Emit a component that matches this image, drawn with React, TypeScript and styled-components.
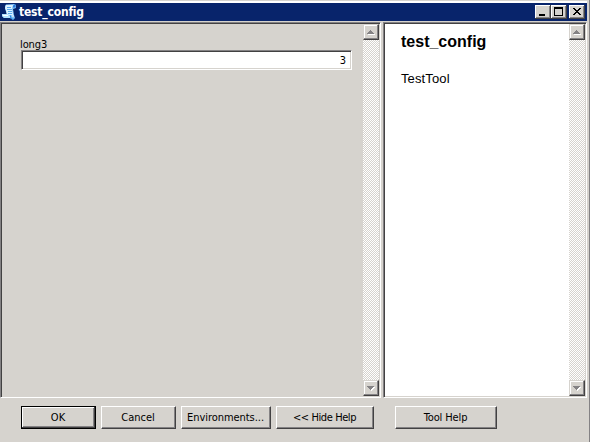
import React from "react";
import styled, { createGlobalStyle, css } from "styled-components";

const face = "#d6d3ce";
const shade = "#848284";
const dark = "#424142";
const uiFont = '"DejaVu Sans Condensed", "DejaVu Sans", sans-serif';

const GlobalStyle = createGlobalStyle`
  * { box-sizing: border-box; }
  body { margin: 0; overflow: hidden; background: ${face}; }
`;

const Window = styled.main`
  width: 590px;
  height: 442px;
  display: flex;
  flex-direction: column;
  background: ${face};
  border-right: 1px solid ${shade};
  font: 11px/14px ${uiFont};
  color: #000;
`;

const TitleBar = styled.header`
  height: 18px;
  margin: 3px 2px 1px 0;
  padding: 0 2px 0 2px;
  display: flex;
  align-items: center;
  background: #08246b;
  color: #fff;
  box-shadow: 0 -2px #fff;
`;

const Title = styled.h1`
  flex: 1;
  margin: 0 0 0 1px;
  font: bold 12px/18px ${uiFont};
  letter-spacing: -0.2px;
`;

const CaptionButton = styled.button<{ $gap?: boolean }>`
  width: 16px;
  height: 14px;
  padding: 0;
  margin-left: ${(p) => (p.$gap ? 2 : 0)}px;
  border: 0;
  display: flex;
  background: ${face};
  box-shadow: inset -1px -1px ${dark}, inset 1px 1px #fff, inset -2px -2px ${shade};
`;

const Panes = styled.div`
  height: 376px;
  display: grid;
  grid-template-columns: 381px 204px;
  column-gap: 2px;
`;

const Pane = styled.section<{ $white?: boolean }>`
  display: flex;
  border: 1px solid;
  border-color: ${shade} #fff #fff ${shade};
  background: ${(p) => (p.$white ? "#fff" : face)};
  box-shadow: inset 1px 1px ${dark}, inset -1px -1px ${face};
  padding: 1px;
`;

const FormBody = styled.div`
  flex: 1;
  padding: 13px 11px 0 19px;
`;

const Label = styled.label`
  display: block;
  height: 13px;
  line-height: 16px;
  margin-left: -1px;
  letter-spacing: -0.1px;
`;

const NumberField = styled.input`
  display: block;
  width: 331px;
  height: 20px;
  padding: 1px 5px 0 4px;
  border: 1px solid;
  border-color: ${shade} #fff #fff ${shade};
  box-shadow: inset 1px 1px ${dark}, inset -1px -1px ${face};
  background: #fff;
  outline: 0;
  font: 11px ${uiFont};
  text-align: right;
`;

const HelpBody = styled.article`
  flex: 1;
  padding: 8px 0 0 16px;
  font-family: "Liberation Sans", Arial, sans-serif;
`;

const HelpTitle = styled.h2`
  margin: 0;
  font-size: 16px;
  line-height: 20px;
`;

const HelpText = styled.p`
  margin: 19px 0 0;
  font-size: 13px;
  line-height: 16px;
  letter-spacing: 0.12px;
`;

const ScrollBar = styled.div`
  width: 16px;
  display: flex;
  flex-direction: column;
  justify-content: space-between;
  background: repeating-conic-gradient(#fff 0 25%, ${face} 0 50%) 0 0 / 2px 2px;
`;

const raised = css`
  background: ${face};
  border: 1px solid;
  border-color: #fff ${dark} ${dark} #fff;
  box-shadow: inset -1px -1px ${shade};
`;

const ScrollButton = styled.button`
  width: 16px;
  height: 16px;
  padding: 0;
  display: flex;
  background: ${face};
  border: 1px solid;
  border-color: ${face} ${dark} ${dark} ${face};
  box-shadow: inset -1px -1px ${shade}, inset 1px 1px #fff;
`;

const Footer = styled.footer`
  display: flex;
  gap: 5px;
  padding: 8px 0 0 21px;
`;

const PushButton = styled.button<{ $width: number; $default?: boolean; $apart?: boolean; $spacing?: number }>`
  ${raised}
  width: ${(p) => p.$width}px;
  height: 23px;
  padding: 1px 1px 0 0;
  margin-left: ${(p) => (p.$apart ? 16 : 0)}px;
  font: 11px/14px ${uiFont};
  letter-spacing: ${(p) => p.$spacing ?? 0}px;
  white-space: nowrap;
  color: #000;
  ${(p) =>
    p.$default &&
    css`
      border-color: #000;
      box-shadow: inset -1px -1px ${dark}, inset 1px 1px #fff, inset -2px -2px ${shade};
    `}
`;

const ScriptIcon = () => (
  <svg width="16" height="18" viewBox="0 0 16 18">
    <path d="M4 1.5 12 1l2 1v3l-3 1 1 6 1 3-2 2-3-2H2l-2-2v-2h5L3 6V3z" fill="#84c3f7" />
    <path d="M4 2h7l-1 3 1 7-6 1-1-6-1-2z" fill="#def3ff" />
    <path d="M12 1.5h1.5v3H11V3z" fill="#2979d6" />
    <path d="M5 4.5h4M5 6.5h5M6 8.5h4M6 10.5h4" stroke="#5aaaf0" />
    <path d="M0 11h6l2 2v2H2l-2-2z" fill="#b5e3ff" />
    <path d="M1 12.5h5M10 13h2" stroke="#fff" />
    <path d="M8 12l1 3 2 1.5 1-1" stroke="#2986de" fill="none" />
  </svg>
);

const Arrow = ({ down }: { down?: boolean }) => (
  <svg width="14" height="14" viewBox="0 0 14 14" shapeRendering="crispEdges">
    {down ? (
      <>
        <path d="M4 6h7v1h-1v1H9v1H8v1H7V9H6V8H5V7H4z" fill="#fff" />
        <path d="M3 5h7v1H9v1H8v1H7v1H6V8H5V7H4V6H3z" fill={shade} />
      </>
    ) : (
      <>
        <path d="M4 9h7v1H4z" fill="#fff" />
        <path d="M6 5h1v1h1v1h1v1h1v1H3V8h1V7h1V6h1z" fill={shade} />
      </>
    )}
  </svg>
);

const Scroll = () => (
  <ScrollBar>
    <ScrollButton aria-label="Scroll up"><Arrow /></ScrollButton>
    <ScrollButton aria-label="Scroll down"><Arrow down /></ScrollButton>
  </ScrollBar>
);

const glyphs = {
  minimize: <path d="M4 9h6v2H4z" />,
  maximize: <path d="M3 2h9v9H3zM4 4v6h7V4z" fillRule="evenodd" />,
  close: <path d="M4 3h2v1h1v1h2V4h1V3h2v1h-1v1h-1v1H9v1h1v1h1v1h1v1h-2V9H9V8H7v1H6v1H4V9h1V8h1V7h1V6H6V5H5V4H4z" />,
};

const Caption = ({ kind, gap }: { kind: keyof typeof glyphs; gap?: boolean }) => (
  <CaptionButton $gap={gap} aria-label={kind}>
    <svg width="16" height="14" viewBox="0 0 16 14" shapeRendering="crispEdges">{glyphs[kind]}</svg>
  </CaptionButton>
);

export default function App() {
  return (
    <>
      <GlobalStyle />
      <Window>
        <TitleBar>
          <ScriptIcon />
          <Title>test_config</Title>
          <Caption kind="minimize" />
          <Caption kind="maximize" />
          <Caption kind="close" gap />
        </TitleBar>
        <Panes>
          <Pane>
            <FormBody>
              <Label htmlFor="long3">long3</Label>
              <NumberField id="long3" defaultValue="3" />
            </FormBody>
            <Scroll />
          </Pane>
          <Pane $white>
            <HelpBody>
              <HelpTitle>test_config</HelpTitle>
              <HelpText>TestTool</HelpText>
            </HelpBody>
            <Scroll />
          </Pane>
        </Panes>
        <Footer>
          <PushButton $width={75} $default>OK</PushButton>
          <PushButton $width={75}>Cancel</PushButton>
          <PushButton $width={90} $spacing={-0.05}>Environments...</PushButton>
          <PushButton $width={98} $spacing={-0.4}>&lt;&lt; Hide Help</PushButton>
          <PushButton $width={102} $apart $spacing={-0.12}>Tool Help</PushButton>
        </Footer>
      </Window>
    </>
  );
}
